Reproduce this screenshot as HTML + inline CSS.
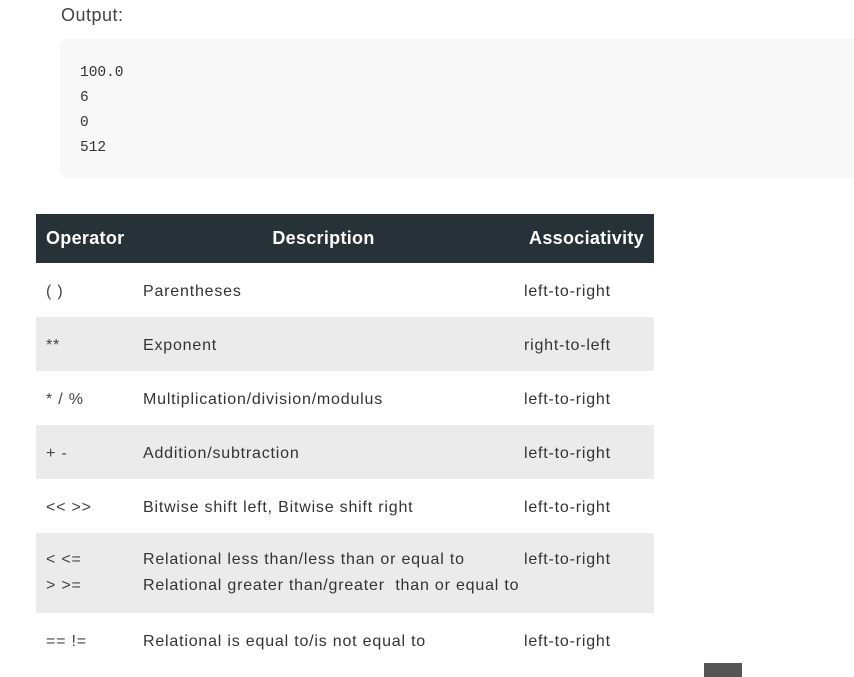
<!DOCTYPE html>
<html><head><style>
body{margin:0;width:854px;height:677px;overflow:hidden;background:#fff;font-family:"Liberation Sans",sans-serif;position:relative;color:#333}
.out{position:absolute;left:61px;top:5px;font-size:18px;color:#444;letter-spacing:0.5px}
.code{position:absolute;left:60px;top:39px;width:810px;height:139px;background:#f8f8f8;border-radius:8px}
.code pre{margin:0;position:absolute;left:20px;top:22px;font-family:"Liberation Mono",monospace;font-size:14.5px;line-height:25px;color:#333}
table{position:absolute;left:36px;top:214px;width:618px;border-collapse:collapse;font-size:16px;table-layout:fixed}
th{background:#263238;color:#fff;height:49px;font-size:18px;padding:0 10px;text-align:center;box-sizing:border-box;letter-spacing:0.3px}
th:first-child{text-align:left}
th:last-child{text-align:right}
td{height:54px;padding:3px 10px 0;vertical-align:middle;color:#333;box-sizing:border-box;letter-spacing:0.8px;white-space:nowrap}
tr:nth-child(odd) td{background:#ebebeb}
td.op{color:#444}
tr.tall td{height:80px;line-height:26px;vertical-align:top;padding-top:14px}
.sq{position:absolute;left:704px;top:663px;width:38px;height:14px;background:#555}
</style></head><body>
<div class="out">Output:</div>
<div class="code"><pre>100.0
6
0
512</pre></div>
<table>
<colgroup><col style="width:97px"><col style="width:381px"><col style="width:140px"></colgroup>
<tr><th>Operator</th><th>Description</th><th>Associativity</th></tr>
<tr><td class="op">( )</td><td>Parentheses</td><td>left-to-right</td></tr>
<tr><td class="op">**</td><td>Exponent</td><td>right-to-left</td></tr>
<tr><td class="op">* / %</td><td>Multiplication/division/modulus</td><td>left-to-right</td></tr>
<tr><td class="op">+ -</td><td>Addition/subtraction</td><td>left-to-right</td></tr>
<tr><td class="op">&lt;&lt; &gt;&gt;</td><td>Bitwise shift left, Bitwise shift right</td><td>left-to-right</td></tr>
<tr class="tall"><td class="op">&lt; &lt;=<br>&gt; &gt;=</td><td>Relational less than/less than or equal to<br>Relational greater than/greater&nbsp; than or equal to</td><td>left-to-right</td></tr>
<tr><td class="op">== !=</td><td>Relational is equal to/is not equal to</td><td>left-to-right</td></tr>
</table>
<div class="sq"></div>
</body></html>
